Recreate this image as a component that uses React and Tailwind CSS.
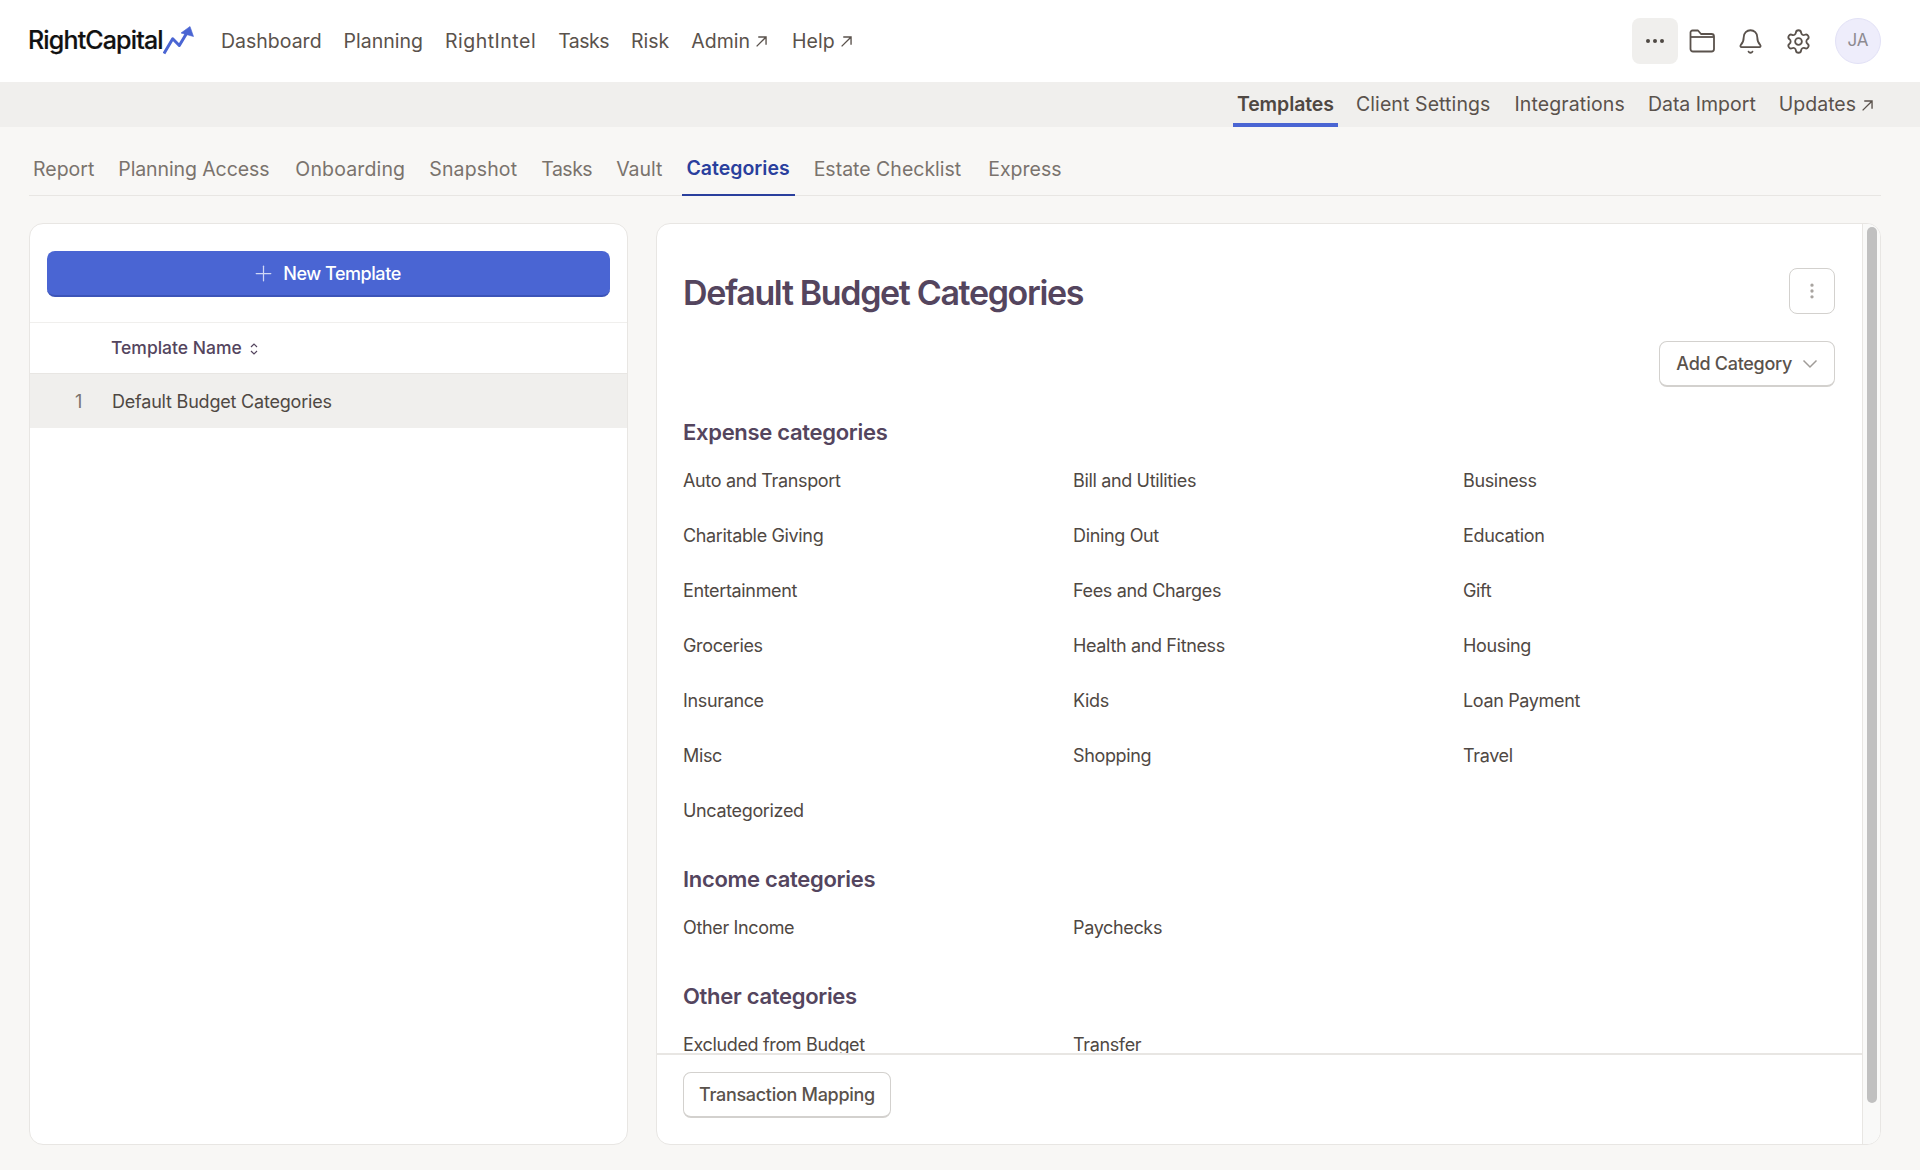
import React from "react";
import { Plus, Bell, Settings, MoreVertical } from "lucide-react";

const font = { fontFamily: '"Inter", "Liberation Sans", sans-serif' };

function ExtArrow({ size = 13 }) {
  return (
    <svg width={size} height={size} viewBox="0 0 12 12" fill="none" stroke="currentColor" strokeWidth="1.25" className="ml-[5px] shrink-0">
      <path d="M1.5 10.5 L10 2 M3 1.8 H10.2 V9" />
    </svg>
  );
}

function Logo() {
  return (
    <div className="flex items-center w-[193px] shrink-0">
      <span className="text-[25px] font-medium tracking-[-0.85px] text-[#111111] [-webkit-text-stroke:0.2px_#111111]">RightCapital</span>
      <svg width="32" height="32" viewBox="0 0 32 32" fill="none" className="-mt-[5px]">
        <path d="M1 30.5 L9.7 15.8 L16.3 22.5 L25 8" stroke="#4a65d3" strokeWidth="3" strokeLinejoin="round" />
        <path d="M27 3.5 L18 10 L30.5 13.5 Z" fill="#4a65d3" stroke="#4a65d3" strokeWidth="0.6" strokeLinejoin="round" />
      </svg>
    </div>
  );
}

const mainNav = [
  ["Dashboard", false, ""],
  ["Planning", false, ""],
  ["RightIntel", false, "tracking-[0.5px]"],
  ["Tasks", false, "tracking-[-0.5px]"],
  ["Risk", false, ""],
  ["Admin", true, ""],
  ["Help", true, "ml-[2px]"],
];

function TopBar() {
  return (
    <header className="h-[82px] bg-white flex items-center pl-[28px] pr-[39px]">
      <Logo />
      <nav className="flex items-center gap-[22px] text-[19.5px] text-[#5a524c] pt-px">
        {mainNav.map(([t, ext, cls]) => (
          <span key={t} className={`flex items-center ${cls}`}>
            {t}
            {ext && <ExtArrow />}
          </span>
        ))}
      </nav>
      <div className="ml-auto flex items-center text-[#5a524c]">
        <div className="w-[46px] h-[46px] rounded-[8px] bg-[#f0efed] flex items-center justify-center gap-[3px]">
          <span className="w-[4px] h-[4px] rounded-full bg-[#4f4843]" />
          <span className="w-[4px] h-[4px] rounded-full bg-[#4f4843]" />
          <span className="w-[4px] h-[4px] rounded-full bg-[#4f4843]" />
        </div>
        <div className="w-[48px] flex justify-center">
          <svg width="26" height="24" viewBox="0 0 26 24" fill="none" stroke="currentColor" strokeWidth="1.8" strokeLinejoin="round">
            <path d="M1.5 6 V3.5 a2 2 0 0 1 2-2 H9 l3 3.5 H22.5 a2.5 2.5 0 0 1 2.5 2.5 V20 a2.5 2.5 0 0 1-2.5 2.5 H4 A2.5 2.5 0 0 1 1.5 20 Z" />
            <path d="M1.5 8 H25" />
          </svg>
        </div>
        <div className="w-[48px] flex justify-center">
          <Bell size={27} strokeWidth={1.6} />
        </div>
        <div className="w-[48px] flex justify-center">
          <Settings size={27} strokeWidth={1.6} />
        </div>
        <div className="w-[46px] h-[46px] rounded-full bg-[#eeedfb] border border-[#e2e1f6] flex items-center justify-center text-[17px] text-[#8d8a90] ml-[13px]">
          JA
        </div>
      </div>
    </header>
  );
}

function SubBar() {
  const items = [
    ["Client Settings", "mr-[24px] tracking-[0.1px]"],
    ["Integrations", "mr-[23px] tracking-[0.1px]"],
    ["Data Import", "mr-[23px]"],
  ];
  return (
    <div className="h-[45px] bg-[#f0efed] flex justify-end items-stretch pr-[46px] text-[19.5px] text-[#5a524c]">
      <div className="flex items-center px-[4px] mr-[18px] font-semibold text-[#4f4843] border-b-[4px] border-[#4a65d3] pt-[4px] tracking-[-0.1px]">
        Templates
      </div>
      {items.map(([t, cls]) => (
        <div key={t} className={`flex items-center pt-px ${cls}`}>
          {t}
        </div>
      ))}
      <div className="flex items-center pt-px">
        Updates
        <ExtArrow />
      </div>
    </div>
  );
}

function Tabs() {
  const before = [
    ["Report", ""],
    ["Planning Access", "tracking-[-0.1px]"],
    ["Onboarding", "ml-[2px] tracking-[0.15px]"],
    ["Snapshot", "tracking-[0.15px]"],
    ["Tasks", "tracking-[-0.5px]"],
    ["Vault", ""],
  ];
  const after = [
    ["Estate Checklist", ""],
    ["Express", "ml-[3px]"],
  ];
  return (
    <div className="h-[69px] ml-[29px] mr-[39px] border-b border-[#e8e6e3] flex items-stretch text-[19.5px] text-[#7a736d] pl-[4px] gap-[24px]">
      {before.map(([t, cls]) => (
        <div key={t} className={`flex items-center pt-[17px] ${cls}`}>
          {t}
        </div>
      ))}
      <div className="flex items-center pt-[17px] px-[5px] -mx-[5px] font-semibold text-[#2a3f9d] border-b-2 border-[#2a3f9d] -mb-px">
        Categories
      </div>
      {after.map(([t, cls]) => (
        <div key={t} className={`flex items-center pt-[17px] ${cls}`}>
          {t}
        </div>
      ))}
    </div>
  );
}

function LeftCard() {
  return (
    <aside className="w-[599px] shrink-0 bg-white border border-[#e8e6e3] rounded-[14px] overflow-hidden flex flex-col">
      <div className="px-[17px] pt-[27px] pb-[25px] border-b border-[#f0efed]">
        <button className="w-full h-[46px] pr-[5px] rounded-[8px] bg-[#4a65d3] border-b-2 border-[#3c54b8] flex items-center justify-center text-white text-[18px] font-medium tracking-[-0.45px]">
          <Plus size={25} strokeWidth={1.2} className="mr-[7px] text-[#cfd7f5]" />
          New Template
        </button>
      </div>
      <div className="h-[51px] flex items-center pl-[81px] pt-px text-[17.5px] font-medium text-[#54455e] border-b border-[#e8e6e3]">
        Template Name
        <svg width="10" height="14" viewBox="0 0 10 14" fill="none" stroke="#54455e" strokeWidth="1.2" className="ml-[7px]">
          <path d="M2 5 L5 2 L8 5 M2 9 L5 12 L8 9" />
        </svg>
      </div>
      <div className="h-[54px] flex items-center bg-[#f0efed] text-[18px] tracking-[-0.2px] text-[#4f4843]">
        <span className="w-[82px] pr-[30px] text-right text-[#7a736d]">1</span>
        Default Budget Categories
      </div>
    </aside>
  );
}

function Section({ title, items, className }) {
  return (
    <section className={className}>
      <h2 className="text-[22px] leading-[30px] font-semibold tracking-[-0.3px] text-[#54455e] mb-[20px]">{title}</h2>
      <div className="grid grid-cols-[390px_390px_390px]">
        {items.map((t) => (
          <div key={t} className="h-[55px] leading-[27px] text-[18px] tracking-[-0.35px] text-[#4f4843]">
            {t}
          </div>
        ))}
      </div>
    </section>
  );
}

const expense = [
  "Auto and Transport", "Bill and Utilities", "Business",
  "Charitable Giving", "Dining Out", "Education",
  "Entertainment", "Fees and Charges", "Gift",
  "Groceries", "Health and Fitness", "Housing",
  "Insurance", "Kids", "Loan Payment",
  "Misc", "Shopping", "Travel",
  "Uncategorized",
];

function OutlineBtn({ children, className = "" }) {
  return (
    <button className={`h-[46px] rounded-[8px] border border-[#d3d1ce] border-b-2 bg-white flex items-center text-[18px] font-medium tracking-[-0.3px] text-[#5a524c] ${className}`}>
      {children}
    </button>
  );
}

function RightCard() {
  return (
    <main className="flex-1 bg-white border border-[#e8e6e3] rounded-[14px] overflow-hidden flex">
      <div className="flex-1 min-w-0 flex flex-col">
        <div className="flex-1 min-h-0 overflow-hidden pl-[26px] pr-[27px]">
          <div className="flex justify-between items-start pt-[44px]">
            <h1 className="text-[34px] leading-[44px] font-semibold tracking-[-1.35px] text-[#54455e] mt-[3px]">Default Budget Categories</h1>
            <button className="w-[46px] h-[46px] rounded-[8px] border border-[#d3d1ce] flex items-center justify-center">
              <MoreVertical size={20} strokeWidth={2} className="text-[#a8a4a0]" />
            </button>
          </div>
          <div className="flex justify-end mt-[26px]">
            <OutlineBtn className="pl-[16px] pr-[16px] tracking-[-0.2px]">
              Add Category
              <svg width="16" height="10" viewBox="0 0 16 10" fill="none" stroke="#a09c98" strokeWidth="1.5" className="ml-[10px]">
                <path d="M1.5 1.5 L8 8 L14.5 1.5" />
              </svg>
            </OutlineBtn>
          </div>
          <Section title="Expense categories" items={expense} className="mt-[30px]" />
          <Section title="Income categories" items={["Other Income", "Paychecks"]} className="mt-[12px]" />
          <Section title="Other categories" items={["Excluded from Budget", "Transfer"]} className="mt-[12px]" />
        </div>
        <div className="h-[91px] shrink-0 border-t-2 border-[#e8e6e3] pl-[26px] pt-[17px]">
          <OutlineBtn className="px-[15px]">Transaction Mapping</OutlineBtn>
        </div>
      </div>
      <div className="w-[18px] shrink-0 bg-[#f9f9f8] border-l border-[#e8e6e3] pl-[4px] pt-[3px]">
        <div className="w-[10px] h-[876px] rounded-full bg-[#c0c0c0]" />
      </div>
    </main>
  );
}

export default function App() {
  return (
    <div style={font} className="w-[1920px] h-[1170px] bg-[#f8f7f5] flex flex-col overflow-hidden antialiased">
      <TopBar />
      <SubBar />
      <Tabs />
      <div className="flex gap-[28px] ml-[29px] mr-[39px] mt-[27px] h-[922px]">
        <LeftCard />
        <RightCard />
      </div>
    </div>
  );
}
